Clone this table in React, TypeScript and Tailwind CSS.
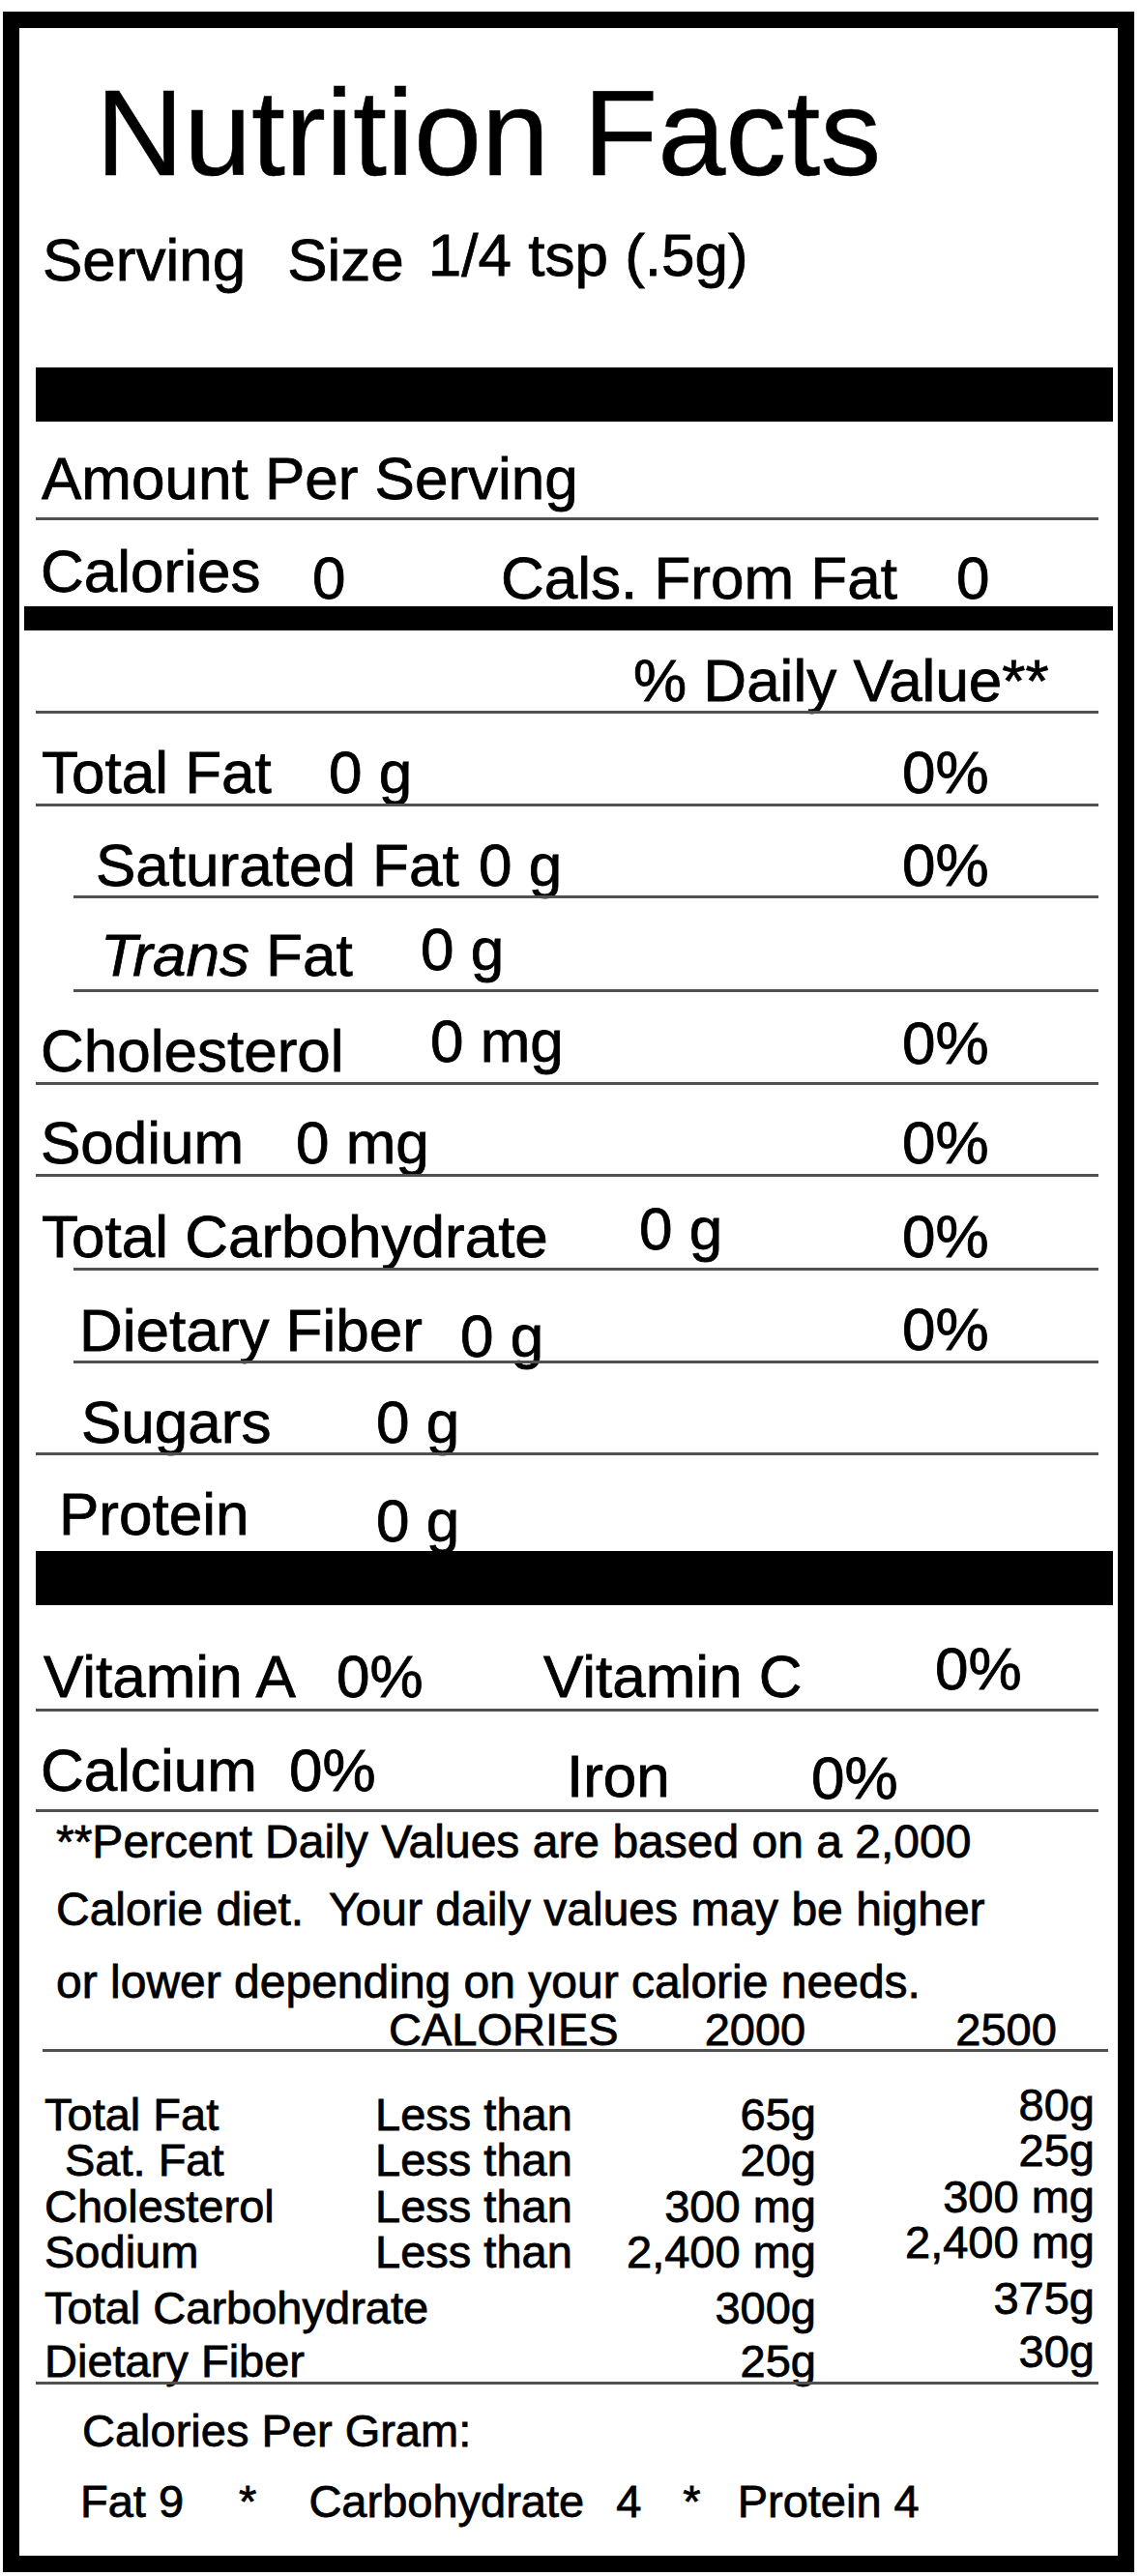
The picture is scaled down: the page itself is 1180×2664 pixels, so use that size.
import React from "react";

const rule = "ml-[17px] w-[1099px] h-[3px] bg-[#505050] shrink-0";
const subRule = "ml-[56px] w-[1060px] h-[3px] bg-[#505050] shrink-0";
const bar = "ml-[17px] w-[1114px] h-[56px] bg-black shrink-0";
const big = "text-[62px] leading-none whitespace-pre";
const cell = "shrink-0 whitespace-pre";

type LimitRow = {
    label: string;
    indent?: boolean;
    less?: boolean;
    v2000: string;
    v2500: string;
    mt: string;
};

const limits: LimitRow[] = [
    { label: "Total Fat", less: true, v2000: "65g", v2500: "80g", mt: "mt-0" },
    { label: "Sat. Fat", indent: true, less: true, v2000: "20g", v2500: "25g", mt: "mt-0" },
    { label: "Cholesterol", less: true, v2000: "300 mg", v2500: "300 mg", mt: "mt-[1px]" },
    { label: "Sodium", less: true, v2000: "2,400 mg", v2500: "2,400 mg", mt: "mt-0" },
    { label: "Total Carbohydrate", v2000: "300g", v2500: "375g", mt: "mt-[11px]" },
    { label: "Dietary Fiber", v2000: "25g", v2500: "30g", mt: "mt-[8px]" },
];

function App() {
    return (
        <div className="w-[1180px] h-[2664px] bg-white pt-[12px] pl-[3px] text-black font-['Liberation_Sans',Arial,sans-serif] [-webkit-text-stroke:0.8px_black]">
            <div className="w-[1170px] h-[2648px] border-[17px] border-black">
                <div className="flex flex-col w-[1136px]">
                    {/* header */}
                    <div className="h-[351px] shrink-0">
                        <div className="pt-[46px] pl-[79px] text-[126px] leading-none whitespace-pre [-webkit-text-stroke:0.5px_black]">
                            Nutrition Facts
                        </div>
                        <div className={"mt-[37px] pl-[24px] flex items-start " + big}>
                            <span>Serving</span>
                            <span className="ml-[43px]">Size</span>
                            <span className="ml-[25px] -mt-[5px]">1/4 tsp (.5g)</span>
                        </div>
                    </div>
                    <div className={bar} />

                    <div className={"h-[99px] pt-[28px] pl-[23px] shrink-0 " + big}>
                        Amount Per Serving
                    </div>
                    <div className={rule} />

                    <div className={"h-[89px] pt-[22px] pl-[22px] flex items-start shrink-0 " + big}>
                        <span className={cell + " w-[281px]"}>Calories</span>
                        <span className={cell + " w-[195px] mt-[7px]"}>0</span>
                        <span className={cell + " w-[471px] mt-[7px]"}>Cals. From Fat</span>
                        <span className={cell + " mt-[7px]"}>0</span>
                    </div>
                    <div className="ml-[5px] w-[1126px] h-[25px] bg-black shrink-0" />

                    <div className={"h-[83px] pt-[21px] pl-[635px] shrink-0 " + big}>
                        % Daily Value**
                    </div>
                    <div className={rule} />

                    <div className={"h-[93px] pt-[30px] pl-[23px] flex items-start shrink-0 " + big}>
                        <span className={cell + " w-[297px]"}>Total Fat</span>
                        <span className={cell + " w-[593px]"}>0 g</span>
                        <span className={cell}>0%</span>
                    </div>
                    <div className={rule} />

                    <div className={"h-[92px] pt-[30px] pl-[79px] flex items-start shrink-0 " + big}>
                        <span className={cell + " w-[396px]"}>Saturated Fat</span>
                        <span className={cell + " w-[438px]"}>0 g</span>
                        <span className={cell}>0%</span>
                    </div>
                    <div className={subRule} />

                    <div className={"h-[94px] pt-[22px] pl-[84px] flex items-start shrink-0 " + big}>
                        <span className={cell + " w-[331px] mt-[6px]"}>
                            <span className="italic">Trans</span> Fat
                        </span>
                        <span className={cell}>0 g</span>
                    </div>
                    <div className={subRule} />

                    <div className={"h-[93px] pt-[20px] pl-[22px] flex items-start shrink-0 " + big}>
                        <span className={cell + " w-[403px] mt-[10px]"}>Cholesterol</span>
                        <span className={cell + " w-[488px]"}>0 mg</span>
                        <span className={cell + " mt-[2px]"}>0%</span>
                    </div>
                    <div className={rule} />

                    <div className={"h-[92px] pt-[29px] pl-[22px] flex items-start shrink-0 " + big}>
                        <span className={cell + " w-[264px]"}>Sodium</span>
                        <span className={cell + " w-[627px]"}>0 mg</span>
                        <span className={cell}>0%</span>
                    </div>
                    <div className={rule} />

                    <div className={"h-[94px] pt-[23px] pl-[23px] flex items-start shrink-0 " + big}>
                        <span className={cell + " w-[618px] mt-[8px]"}>Total Carbohydrate</span>
                        <span className={cell + " w-[272px]"}>0 g</span>
                        <span className={cell + " mt-[8px]"}>0%</span>
                    </div>
                    <div className={subRule} />

                    <div className={"h-[93px] pt-[30px] pl-[62px] flex items-start shrink-0 " + big}>
                        <span className={cell + " w-[394px] mt-[1px]"}>Dietary Fiber</span>
                        <span className={cell + " w-[457px] mt-[7px]"}>0 g</span>
                        <span className={cell}>0%</span>
                    </div>
                    <div className={subRule} />

                    <div className={"h-[92px] pt-[30px] pl-[64px] flex items-start shrink-0 " + big}>
                        <span className={cell + " w-[305px]"}>Sugars</span>
                        <span className={cell}>0 g</span>
                    </div>
                    <div className={rule} />

                    <div className={"h-[99px] pt-[30px] pl-[41px] flex items-start shrink-0 " + big}>
                        <span className={cell + " w-[328px]"}>Protein</span>
                        <span className={cell + " mt-[7px]"}>0 g</span>
                    </div>
                    <div className={bar} />

                    <div className={"h-[107px] pt-[35px] pl-[25px] flex items-start shrink-0 " + big}>
                        <span className={cell + " w-[303px] mt-[8px]"}>Vitamin A</span>
                        <span className={cell + " w-[214px] mt-[8px]"}>0%</span>
                        <span className={cell + " w-[405px] mt-[8px]"}>Vitamin C</span>
                        <span className={cell}>0%</span>
                    </div>
                    <div className={rule} />

                    <div className={"h-[101px] pt-[30px] pl-[22px] flex items-start shrink-0 " + big}>
                        <span className={cell + " w-[257px]"}>Calcium</span>
                        <span className={cell + " w-[287px]"}>0%</span>
                        <span className={cell + " w-[253px] mt-[6px]"}>Iron</span>
                        <span className={cell + " mt-[8px]"}>0%</span>
                    </div>
                    <div className={rule} />

                    {/* footnote */}
                    <div className="h-[245px] pl-[38px] shrink-0">
                        <div className="pt-[7px] text-[48px] leading-none whitespace-pre">
                            **Percent Daily Values are based on a 2,000
                        </div>
                        <div className="mt-[22px] text-[48px] leading-none whitespace-pre">
                            Calorie diet.  Your daily values may be higher
                        </div>
                        <div className="mt-[27px] text-[48px] leading-none whitespace-pre">
                            or lower depending on your calorie needs.
                        </div>
                        <div className="mt-[1px] flex text-[47px] leading-none whitespace-pre">
                            <span className="ml-[344px]">CALORIES</span>
                            <span className="ml-[89px]">2000</span>
                            <span className="ml-[155px]">2500</span>
                        </div>
                    </div>
                    <div className="ml-[24px] w-[1102px] h-[3px] bg-[#505050] shrink-0" />

                    <div className="h-[341px] pt-[41px] shrink-0 text-[47px] leading-none">
                        {limits.map((r) => (
                            <div
                                key={r.label}
                                className={"grid grid-cols-[342px_458px_288px] items-start pl-[26px] h-[47px] " + r.mt}
                            >
                                <span className={"whitespace-pre " + (r.indent ? "pl-[21px]" : "")}>
                                    {r.label}
                                </span>
                                <span className="flex justify-between whitespace-pre">
                                    <span>{r.less ? "Less than" : ""}</span>
                                    <span className="mr-[2px]">{r.v2000}</span>
                                </span>
                                <span className="text-right whitespace-pre -mt-[10px] mr-[2px]">
                                    {r.v2500}
                                </span>
                            </div>
                        ))}
                    </div>
                    <div className={rule} />

                    <div className="h-[177px] pt-[24px] pl-[65px] shrink-0 text-[47px] leading-none">
                        <div className="whitespace-pre">Calories Per Gram:</div>
                        <div className="mt-[26px] -ml-[2px] flex whitespace-pre">
                            <span>Fat 9</span>
                            <span className="ml-[57px]">*</span>
                            <span className="ml-[54px]">Carbohydrate</span>
                            <span className="ml-[33px]">4</span>
                            <span className="ml-[43px]">*</span>
                            <span className="ml-[38px]">Protein 4</span>
                        </div>
                    </div>
                </div>
            </div>
        </div>
    );
}

export default App;
